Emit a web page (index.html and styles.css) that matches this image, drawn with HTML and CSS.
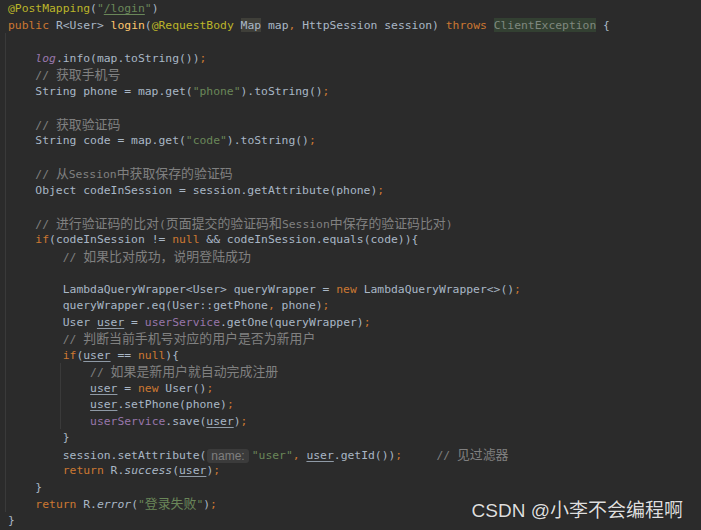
FILE: index.html
```html
<!DOCTYPE html>
<html lang="zh-CN">
<head>
<meta charset="UTF-8">
<meta name="viewport" content="width=device-width, initial-scale=1.0">
<title>UserController login</title>
<link rel="stylesheet" href="styles.css">
</head>
<body>

<div class="editor">
    <div class="code">
        <div class="ln"><span class="an">@PostMapping</span>(<span class="str">"<u>/login</u>"</span>)</div>
        <div class="ln"><span class="kw">public</span> R&lt;User&gt; <span class="fn">login</span>(<span class="an">@RequestBody</span> <span class="hl">Map</span> map<span class="kw">,</span> HttpSession session) <span class="kw">throws</span> <span class="unused">ClientException</span> {</div>

        <!-- method body -->
        <div class="block">
            <div class="ln"></div>
            <div class="ln">    <i class="fld">log</i>.info(map.toString())<span class="kw">;</span></div>
            <div class="ln">    <span class="cm">// <span class="zh">获取手机号</span></span></div>
            <div class="ln">    String phone = map.get(<span class="str">"phone"</span>).toString()<span class="kw">;</span></div>
            <div class="ln"></div>
            <div class="ln">    <span class="cm">// <span class="zh">获取验证码</span></span></div>
            <div class="ln">    String code = map.get(<span class="str">"code"</span>).toString()<span class="kw">;</span></div>
            <div class="ln"></div>
            <div class="ln">    <span class="cm">// <span class="zh">从</span>Session<span class="zh">中获取保存的验证码</span></span></div>
            <div class="ln">    Object codeInSession = session.getAttribute(phone)<span class="kw">;</span></div>
            <div class="ln"></div>
            <div class="ln">    <span class="cm">// <span class="zh">进行验证码的比对</span>(<span class="zh">页面提交的验证码和</span>Session<span class="zh">中保存的验证码比对</span>)</span></div>
            <div class="ln">    <span class="kw">if</span>(codeInSession != <span class="kw">null</span> &amp;&amp; codeInSession.equals(code)){</div>
            <div class="ln">        <span class="cm">// <span class="zh">如果比对成功，说明登陆成功</span></span></div>
            <div class="ln"></div>
            <div class="ln">        LambdaQueryWrapper&lt;User&gt; queryWrapper = <span class="kw">new</span> LambdaQueryWrapper&lt;&gt;()<span class="kw">;</span></div>
            <div class="ln">        queryWrapper.eq(User::getPhone<span class="kw">,</span> phone)<span class="kw">;</span></div>
            <div class="ln">        User <u class="re">user</u> = <span class="fld">userService</span>.getOne(queryWrapper)<span class="kw">;</span></div>
            <div class="ln">        <span class="cm">// <span class="zh">判断当前手机号对应的用户是否为新用户</span></span></div>
            <div class="ln">        <span class="kw">if</span>(<u class="re">user</u> == <span class="kw">null</span>){</div>

            <!-- new user branch -->
            <div class="block inner">
                <div class="ln">            <span class="cm">// <span class="zh">如果是新用户就自动完成注册</span></span></div>
                <div class="ln">            <u class="re">user</u> = <span class="kw">new</span> User()<span class="kw">;</span></div>
                <div class="ln">            <u class="re">user</u>.setPhone(phone)<span class="kw">;</span></div>
                <div class="ln">            <span class="fld">userService</span>.save(<u class="re">user</u>)<span class="kw">;</span></div>
            </div>

            <div class="ln">        }</div>
            <div class="ln">        session.setAttribute(<span class="hint">name:</span><span class="str">"user"</span><span class="kw">,</span> <u class="re">user</u>.getId())<span class="kw">;</span>     <span class="cm">// <span class="zh">见过滤器</span></span></div>
            <div class="ln">        <span class="kw">return</span> R.<i>success</i>(<u class="re">user</u>)<span class="kw">;</span></div>
            <div class="ln">    }</div>
            <div class="ln">    <span class="kw">return</span> R.<i>error</i>(<span class="str">"<span class="zh">登录失败</span>"</span>)<span class="kw">;</span></div>
        </div>

        <div class="ln">}</div>
    </div>

    <div class="watermark">CSDN @小李不会编程啊</div>
</div>

</body>
</html>
```

FILE: styles.css
```css
/* Reset */
* {
    box-sizing: border-box;
    margin: 0;
    padding: 0;
}

body {
    background: #2b2b2b;
    width: 701px;
    height: 530px;
    overflow: hidden;
}

.editor {
    position: relative;
    height: 530px;
    background: #2b2b2b;
}

/* Code area */
.code {
    padding-left: 8px;
    font-family: 'DejaVu Sans Mono', 'Noto Sans CJK SC', monospace;
    font-size: 11.36px;
    color: #a9b7c6;
}

.ln {
    height: 16.5px;
    line-height: 16.5px;
    white-space: pre;
}

/* Indent guides */
.block {
    position: relative;
}

.block::before {
    content: "";
    position: absolute;
    top: 0;
    bottom: 0;
    left: -3px;
    width: 1px;
    background: #3a3a3a;
}

.block.inner::before {
    left: 52px;
}

/* Syntax colours */
.kw { color: #cc7832; }
.an { color: #bbb529; }
.str { color: #6a8759; }
.fn { color: #ffc66d; }
.fld { color: #9876aa; }
.cm { color: #808080; }

i {
    font-style: italic;
}

u {
    text-decoration: underline;
    text-underline-offset: 2px;
    text-decoration-thickness: 1px;
}

.re {
    text-decoration-color: #8f9aa6;
}

.hl {
    background: #3f3f39;
}

.unused {
    color: #7f887f;
    background: #334032;
}

.zh {
    font-family: 'Noto Sans CJK SC', sans-serif;
    font-size: 12.9px;
}

/* Parameter hint */
.hint {
    display: inline-block;
    margin: 0 3px 0 1px;
    padding: 0 4px;
    height: 14px;
    line-height: 14px;
    vertical-align: -1px;
    background: #3b3b3b;
    border-radius: 3px;
    font-family: 'Liberation Sans', Arial, sans-serif;
    font-size: 12px;
    color: #7f7f7f;
}

/* Watermark */
.watermark {
    position: absolute;
    right: 18px;
    bottom: 8px;
    font-family: 'Liberation Sans', 'Noto Sans CJK SC', sans-serif;
    font-size: 19px;
    color: #dedede;
    text-shadow: 0 0 1px rgba(0, 0, 0, 0.6);
}
```
